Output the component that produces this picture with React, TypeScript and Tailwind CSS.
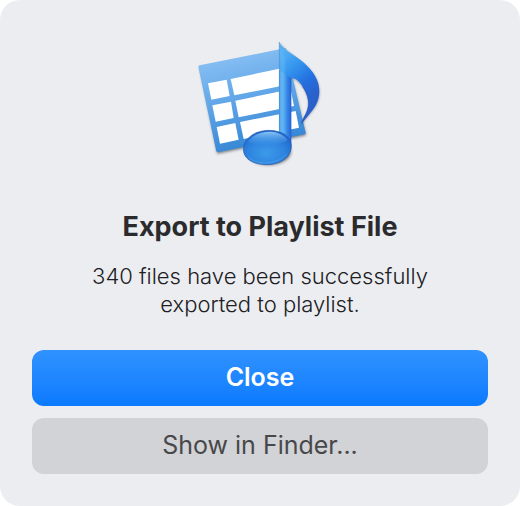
function PlaylistIcon() {
  return (
    <svg className="h-[145px] w-[150px]" viewBox="0 0 450 435" aria-hidden="true">
      <defs>
        <linearGradient id="sheet" x1="0" y1="0" x2="0.25" y2="1">
          <stop offset="0" stopColor="#92c6f5" />
          <stop offset="0.5" stopColor="#65a9ea" />
          <stop offset="1" stopColor="#3788d6" />
        </linearGradient>
        <linearGradient id="stem" x1="0" y1="0" x2="1" y2="0">
          <stop offset="0" stopColor="#4a9be6" />
          <stop offset="0.25" stopColor="#5db0f3" />
          <stop offset="0.6" stopColor="#3a8ee8" />
          <stop offset="0.88" stopColor="#2a70de" />
          <stop offset="1" stopColor="#1f5cc8" />
        </linearGradient>
        <linearGradient id="flag" gradientUnits="userSpaceOnUse" x1="285" y1="70" x2="392" y2="190">
          <stop offset="0" stopColor="#55b0f4" />
          <stop offset="0.35" stopColor="#3596ee" />
          <stop offset="0.7" stopColor="#2470e0" />
          <stop offset="1" stopColor="#2a60cc" />
        </linearGradient>
        <radialGradient id="head" cx="0.48" cy="0.66" r="0.66">
          <stop offset="0" stopColor="#3c9bea" />
          <stop offset="0.6" stopColor="#2d82de" />
          <stop offset="1" stopColor="#1f62ca" />
        </radialGradient>
        <linearGradient id="shine" x1="0" y1="0" x2="0" y2="1">
          <stop offset="0" stopColor="#a5dcff" stopOpacity="0.8" />
          <stop offset="1" stopColor="#5bb0f3" stopOpacity="0" />
        </linearGradient>
        <filter id="shadow" x="-20%" y="-20%" width="140%" height="140%">
          <feGaussianBlur stdDeviation="4" />
        </filter>
        <filter id="soft" x="-20%" y="-20%" width="140%" height="140%">
          <feGaussianBlur stdDeviation="3" />
        </filter>
      </defs>
      <path d="M46 116 L300 62 L363 316 L97 371 Z" fill="#34383d" opacity="0.65" filter="url(#shadow)" />
      <path d="M44 106 L302 54 L362 308 Q363 312 359 313 L98 367 L94 364 L40 111 Q40 107 44 106 Z" fill="url(#sheet)" />
      <g fill="#fff">
        <path d="M69 160 L125 149 L134 198 L79 209 Z" />
        <path d="M137 147 L304 112 L314 163 L148 196 Z" />
        <path d="M82 226 L138 215 L146 264 L92 275 Z" />
        <path d="M151 212 L317 178 L327 228 L161 262 Z" />
        <path d="M95 291 L151 279 L161 329 L105 341 Z" />
        <path d="M165 276 L332 243 L342 293 L176 327 Z" />
      </g>
      <ellipse cx="251" cy="365" rx="67" ry="40" fill="#252c35" opacity="0.65" filter="url(#shadow)" />
      <path
        d="M283 36 C301 67 336 78 370 113 C391 135 404 157 404 188 C404 218 388 238 369 260 C362 268 357 275 351 282 C351 270 362 258 367 242 C373 222 371 199 353 172 C343 157 330 148 318 144 Z"
        fill="#3c3c42"
        opacity="0.4"
        filter="url(#soft)"
      />
      <path
        d="M283 36 C298 66 338 76 369 110 C390 132 403 155 403 184 C403 217 387 237 368 259 C360 268 356 275 350 281 C350 270 362 257 367 241 C374 221 371 196 353 170 C343 155 334 145 319 145 L283 145 Z"
        fill="url(#flag)"
      />
      <path d="M353 170 C371 196 374 221 367 241 C362 257 350 270 350 281" fill="none" stroke="#1f55ba" strokeWidth="2" />
      <path d="M282 120 L319 145 L319 350 C319 374 300 380 282 356 Z" fill="url(#stem)" />
      <path d="M285 58 L300 80 L300 320 L285 320 Z" fill="#6abcf7" opacity="0.45" filter="url(#soft)" />
      <path d="M283 36 L283 301" stroke="#4583bd" strokeWidth="1.5" />
      <path
        d="M175 360 C174 326 210 301 252 301 C291 301 319 321 319 347 C319 381 286 404 244 404 C204 404 176 386 175 360 Z"
        fill="url(#head)"
        stroke="#1c4f9f"
        strokeWidth="1.5"
      />
      <path d="M188 337 C203 314 229 305 256 305 C281 306 300 317 308 331 C282 348 219 348 188 337 Z" fill="url(#shine)" />
      <path d="M190 381 C216 408 279 404 304 373" fill="none" stroke="#61b1f2" strokeWidth="3" opacity="0.5" />
    </svg>
  );
}

export default function App() {
  return (
    <div className="min-h-screen bg-white font-['Inter',sans-serif]">
      <main
        role="dialog"
        aria-labelledby="dialog-title"
        aria-describedby="dialog-message"
        className="flex min-h-screen flex-col items-center rounded-[20px] bg-[#ecedf1] px-8 pt-[30px] pb-8 text-center"
      >
        <PlaylistIcon />
        <h1 id="dialog-title" className="mt-9 text-[27px] leading-8 font-bold text-[#2b2b2e]">
          Export to Playlist File
        </h1>
        <p id="dialog-message" className="mt-[19px] max-w-[400px] text-[22px] leading-7 font-light text-[#202023]">
          340 files have been successfully exported to playlist.
        </p>
        <div className="mt-8 flex w-full flex-col gap-3">
          <button
            type="button"
            className="h-14 rounded-xl bg-linear-to-b from-[#2f92ff] to-[#0a7aff] pb-0.5 text-[25px] leading-8 font-semibold text-white"
          >
            Close
          </button>
          <button
            type="button"
            className="h-14 rounded-xl bg-[#d2d3d6] pb-0.5 text-[25px] leading-8 text-[#48484b]"
          >
            Show in Finder...
          </button>
        </div>
      </main>
    </div>
  );
}
